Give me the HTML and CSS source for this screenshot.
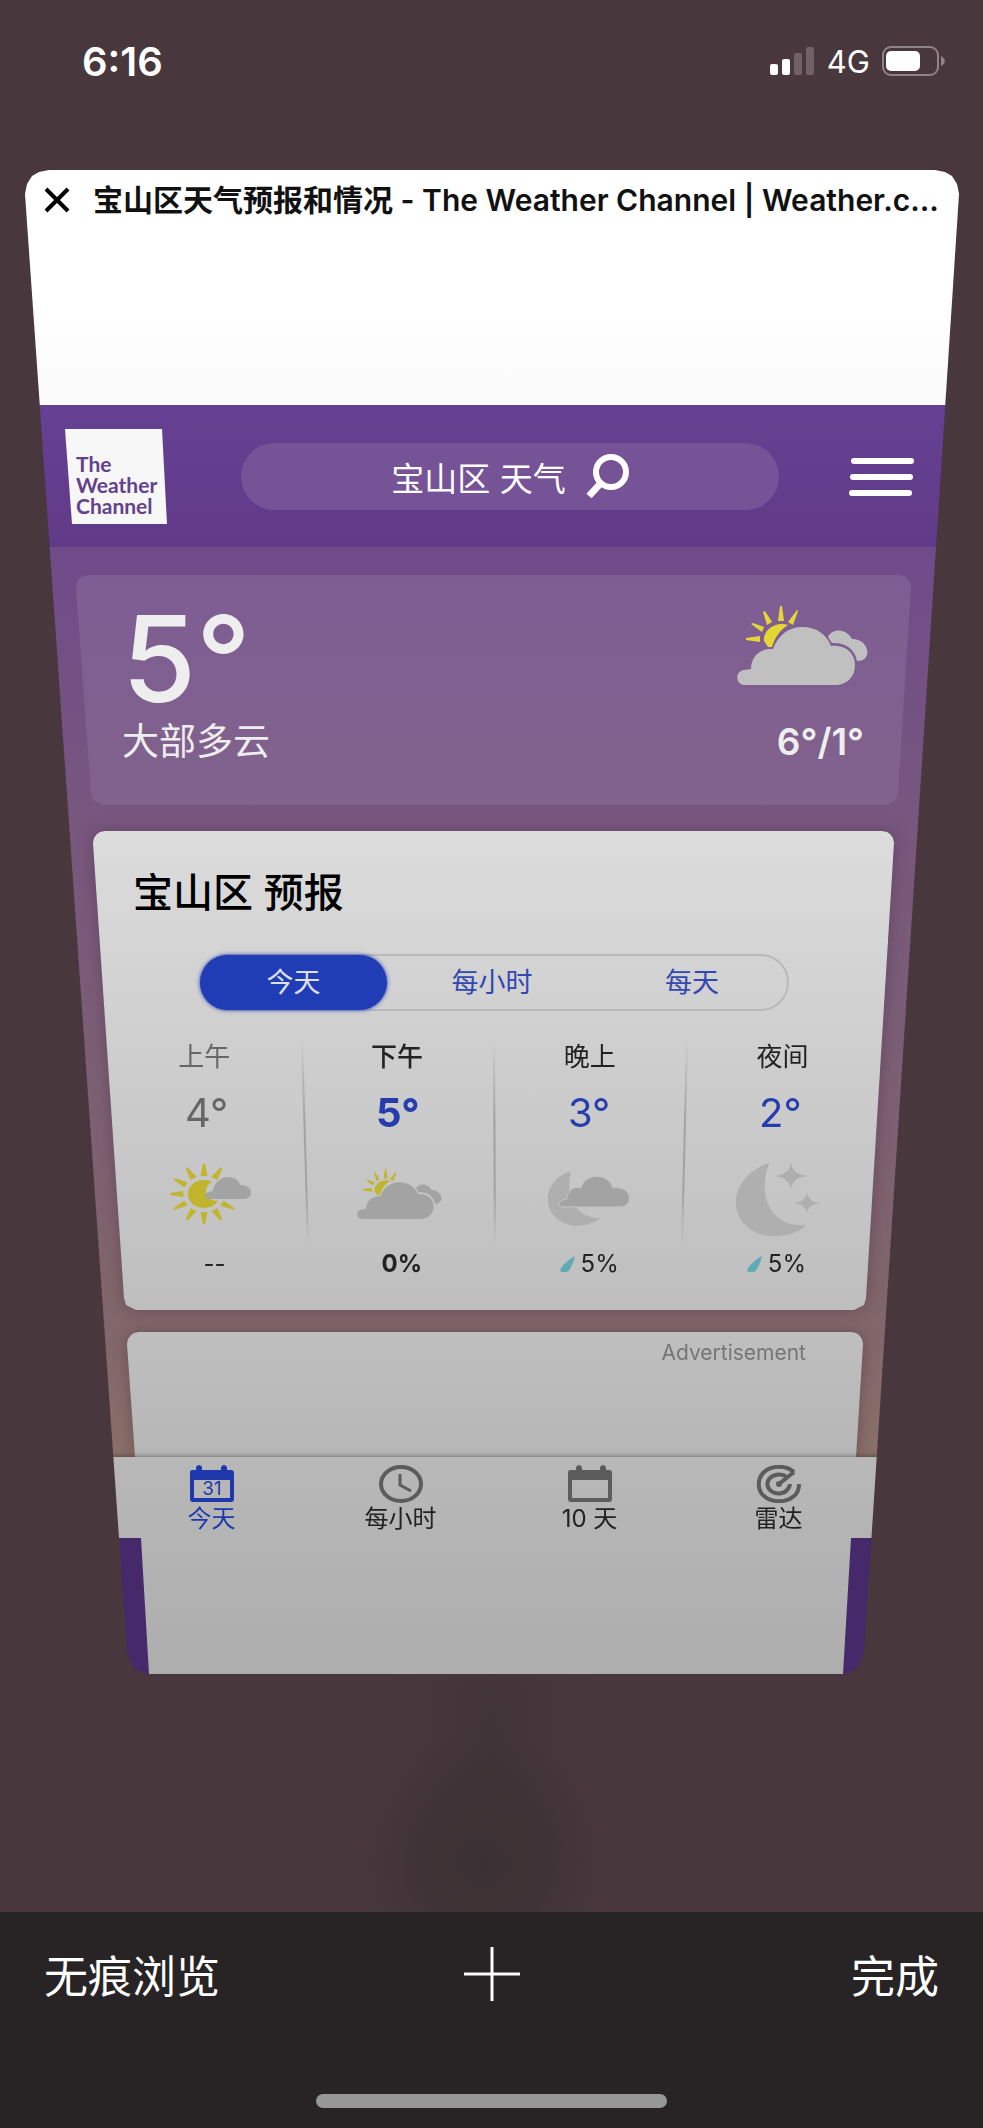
FILE: index.html
```html
<!DOCTYPE html>
<html lang="zh-CN">

<head>
  <meta charset="UTF-8">
  <meta name="viewport" content="width=device-width, initial-scale=1.0">
  <title>宝山区天气预报和情况</title>
  <link rel="stylesheet" href="styles.css">
</head>

<body>
  <!-- 共用图标 -->
  <svg class="defs" aria-hidden="true">
    <symbol id="cloudy" viewBox="0 0 131 79" preserveAspectRatio="none">
      <g class="sun">
        <path d="M31 41 L35 41 C38 31 43 24 51 19 C40 15 26 23 27 35 Z" />
        <path d="M9 32 L23 30 L23 36 L9 34 Z M14 18 L16 17 L27 21 L25 26 Z M26 6 L28 5 L35 16 L30 19 Z M43 0 L45 0 L47 15 L41 15 Z M60 4 L61 5 L56 19 L51 16 Z" />
      </g>
      <path class="cloud" d="M91 31 C95 22 109 22 115 33 C128 33 133 45 129 51 C127 54 124 55 120 55 C118 43 108 36 95 37 Z" />
      <path class="cloud" d="M7 79 C-2 78 -2 65 7 64 L14 63 C14 50 24 42 36 43 C41 29 52 21 65 21 C80 21 90 29 94 40 C108 38 118 47 118 59 C118 71 110 79 98 79 Z" />
    </symbol>
    <symbol id="drop" viewBox="0 0 15 16">
      <path d="M15 0 C14 5 12 9 10 13 C8 17 3 17 0 15 C1 10 8 4 15 0 Z" />
    </symbol>
  </svg>

  <header class="status">
    <span class="time">6:16</span>
    <div class="status-icons">
      <svg width="45" height="28" viewBox="0 0 45 28" fill="#fff">
        <rect x="0" y="17" width="8" height="11" rx="2" />
        <rect x="12" y="12" width="8" height="16" rx="2" />
        <rect x="24" y="6" width="8" height="22" rx="2" opacity=".22" />
        <rect x="36" y="0" width="8" height="28" rx="2" opacity=".22" />
      </svg>
      <span class="network">4G</span>
      <svg width="63" height="30" viewBox="0 0 63 30">
        <rect x="1" y="1" width="55" height="28" rx="8" fill="none" stroke="#8f8487" stroke-width="2" />
        <rect x="4" y="5" width="34" height="20" rx="5" fill="#fff" />
        <path d="M59 10 C64 12 64 18 59 20 Z" fill="#8f8487" />
      </svg>
    </div>
  </header>

  <main class="tab-card">
    <div class="tab-title">
      <button class="close" aria-label="关闭">
        <svg width="26" height="26" viewBox="0 0 26 26"><path d="M2 2 L24 24 M24 2 L2 24" stroke="#000" stroke-width="4" /></svg>
      </button>
      <h1>宝山区天气预报和情况 - The Weather Channel | Weather.c...</h1>
    </div>

    <div class="site-header">
      <a class="logo" href="#">The<br>Weather<br>Channel</a>
      <button class="search">
        宝山区 天气
        <svg width="43" height="45" viewBox="0 0 43 45" fill="none" stroke="#fff">
          <circle cx="25" cy="18" r="15" stroke-width="6" />
          <path d="M14 30 L3 42" stroke-width="7" />
        </svg>
      </button>
      <button class="menu" aria-label="菜单">
        <svg width="66" height="40" viewBox="0 0 66 40" stroke="#fff" stroke-width="6" stroke-linecap="round">
          <path d="M5 4 H62 M4 20 H61 M3 36 H60" />
        </svg>
      </button>
    </div>

    <div class="page">
      <section class="current trapezoid">
        <div>
          <div class="temp">5°</div>
          <div class="phrase">大部多云</div>
        </div>
        <div class="current-right">
          <svg class="icon-light" width="131" height="79"><use href="#cloudy" /></svg>
          <div class="range">6°/1°</div>
        </div>
      </section>

      <div class="shadow">
        <section class="forecast trapezoid">
          <h2>宝山区 预报</h2>
          <div class="tabs">
            <button class="active">今天</button>
            <button>每小时</button>
            <button>每天</button>
          </div>
          <div class="forecast-body">
            <svg class="dividers" viewBox="0 0 801 205" preserveAspectRatio="none" aria-hidden="true">
              <defs>
                <linearGradient id="fade" gradientUnits="userSpaceOnUse" x1="0" y1="0" x2="0" y2="205">
                  <stop offset="0" stop-color="#a2a2a2" stop-opacity="0" />
                  <stop offset=".4" stop-color="#a2a2a2" />
                  <stop offset=".75" stop-color="#a2a2a2" />
                  <stop offset="1" stop-color="#a2a2a2" stop-opacity="0" />
                </linearGradient>
              </defs>
              <path d="M209 0 L215 205 M401 0 L402 205 M594 0 L589 205" stroke="url(#fade)" stroke-width="2" />
            </svg>
            <table>
              <thead>
                <tr class="row-name">
                  <th class="past">上午</th>
                  <th class="now">下午</th>
                  <th>晚上</th>
                  <th>夜间</th>
                </tr>
              </thead>
              <tbody>
                <tr class="row-temp">
                  <td class="past">4°</td>
                  <td class="now">5°</td>
                  <td>3°</td>
                  <td>2°</td>
                </tr>
                <tr class="row-icon">
                  <td>
                    <svg width="81" height="60" viewBox="0 0 81 60">
                      <g class="sun" transform="translate(34 30) scale(1.15 1)">
                        <circle r="14" />
                        <path id="ray" d="M-1 -30 H1 L3 -18 H-3 Z" />
                        <use href="#ray" transform="rotate(30)" />
                        <use href="#ray" transform="rotate(120)" />
                        <use href="#ray" transform="rotate(150)" />
                        <use href="#ray" transform="rotate(180)" />
                        <use href="#ray" transform="rotate(210)" />
                        <use href="#ray" transform="rotate(240)" />
                        <use href="#ray" transform="rotate(270)" />
                        <use href="#ray" transform="rotate(300)" />
                        <use href="#ray" transform="rotate(330)" />
                      </g>
                      <circle class="hole" cx="46" cy="27" r="10" />
                      <path class="cloud" d="M36 35 C33 31 37 28 43 27 C45 10 67 9 70 21 C83 20 85 35 73 35 Z" />
                    </svg>
                  </td>
                  <td><svg width="85" height="50"><use href="#cloudy" /></svg></td>
                  <td>
                    <svg width="82" height="63" viewBox="0 -8 82 63">
                      <path class="moon" d="M23 0 C-3 8 -8 37 12 50 C25 58 43 55 53 47 C30 48 16 28 23 0 Z" />
                      <path class="cloud edged" d="M15 36 C10 36 10 30 15 29 L19 28 C19 20 25 15 33 17 C37 2 60 1 65 17 C85 14 86 36 72 36 Z" />
                    </svg>
                  </td>
                  <td>
                    <svg width="85" height="84" viewBox="0 -10 85 84">
                      <path class="moon" d="M33 1 C-3 13 -12 52 17 69 C36 79 62 73 70 63 C38 66 20 38 33 1 Z" />
                      <path class="moon" d="M55 0 Q56 13 72 14 Q56 15 55 28 Q54 15 38 14 Q54 13 55 0 Z M71 30 Q72 40 84 41 Q72 42 71 52 Q70 42 58 41 Q70 40 71 30 Z" />
                    </svg>
                  </td>
                </tr>
                <tr class="row-rain">
                  <td>--</td>
                  <td class="now">0%</td>
                  <td><svg class="drop" width="15" height="16"><use href="#drop" /></svg>5%</td>
                  <td><svg class="drop" width="15" height="16"><use href="#drop" /></svg>5%</td>
                </tr>
              </tbody>
            </table>
          </div>
        </section>
      </div>

      <div class="shadow">
        <section class="ad">Advertisement</section>
      </div>
    </div>

    <nav class="bottom-nav">
      <a class="active" href="#">
        <svg width="46" height="38" viewBox="0 0 46 38">
          <path fill="currentColor" fill-rule="evenodd" d="M3 5 H7 V2 Q10 -2 13 2 V5 H32 V2 Q35 -2 38 2 V5 H42 Q45 5 45 8 V34 Q45 37 42 37 H4 Q1 37 1 34 V8 Q1 5 3 5 Z M5 15 V33 H41 V15 Z" />
          <text x="23" y="30" text-anchor="middle" class="day">31</text>
        </svg>
        今天
      </a>
      <a href="#">
        <svg class="gray" width="46" height="38" viewBox="0 0 46 38" fill="none" stroke="currentColor" stroke-width="4">
          <ellipse cx="23" cy="19" rx="20" ry="17" />
          <path d="M22 9 V20 L33 26" stroke-width="3" />
        </svg>
        每小时
      </a>
      <a href="#">
        <svg class="gray" width="46" height="38" viewBox="0 0 46 38">
          <path fill="currentColor" fill-rule="evenodd" d="M3 5 H9 V2 Q12 -2 15 2 V5 H33 V2 Q36 -2 39 2 V5 H42 Q45 5 45 8 V34 Q45 37 42 37 H4 Q1 37 1 34 V8 Q1 5 3 5 Z M5 15 V33 H41 V15 Z" />
        </svg>
        10 天
      </a>
      <a href="#">
        <svg class="gray" width="46" height="38" viewBox="0 0 46 38" fill="none" stroke="currentColor" stroke-width="4">
          <path d="M38 7 C30 0 16 0 8 7 C1 14 1 25 8 31 C16 38 30 38 38 31 C42 28 43 23 43 19" />
          <path d="M31 12 C26 8 18 9 14 13 C10 17 11 23 15 26 C20 30 28 29 31 25 C33 23 34 21 34 19" />
          <path d="M23 19 L38 7" />
          <circle cx="23" cy="19" r="3" fill="currentColor" stroke="none" />
        </svg>
        雷达
      </a>
    </nav>
    <div class="page-end"><div></div></div>
  </main>

  <footer class="toolbar">
    <div class="actions">
      <button>无痕浏览</button>
      <button aria-label="新建标签页">
        <svg width="56" height="56" viewBox="0 0 56 56"><path d="M28 1 V55 M0 28 H56" stroke="#fff" stroke-width="3" /></svg>
      </button>
      <button>完成</button>
    </div>
    <div class="home-bar"></div>
  </footer>
</body>

</html>
```

FILE: styles.css
```css
* {
  box-sizing: border-box;
}

body {
  margin: 0;
  min-height: 100vh;
  display: flex;
  flex-direction: column;
  background:
    radial-gradient(ellipse 140px 130px at 49% 1865px, #3b3033, transparent),
    radial-gradient(ellipse 110px 260px at 50% 1740px, #413438, transparent),
    #48383d;
  font-family: Inter, "Noto Sans CJK SC", sans-serif;
  color: #222;
}

button {
  border: 0;
  padding: 0;
  background: none;
  font-family: inherit;
  color: inherit;
}

a {
  color: inherit;
  text-decoration: none;
}

svg {
  display: block;
  flex-shrink: 0;
}

.defs {
  position: absolute;
  width: 0;
  height: 0;
}

/* 状态栏 */
.status {
  display: flex;
  justify-content: space-between;
  align-items: center;
  padding: 36px 38px 0 82px;
  height: 86px;
  margin-bottom: 84px;
  color: #fff;
}

.time {
  font-size: 40px;
  font-weight: 600;
}

.status-icons {
  display: flex;
  align-items: center;
  gap: 12px;
}

.network {
  font-size: 31px;
}

/* 倾斜的标签页卡片 */
.tab-card {
  margin: 0 24px 0 25px;
  clip-path: polygon(0 24px, 2px 14px, 7px 6px, 14px 2px, 24px 0, calc(100% - 24px) 0, calc(100% - 14px) 2px, calc(100% - 7px) 6px, calc(100% - 2px) 14px, 100% 24px, calc(100% - 95px) calc(100% - 22px), calc(100% - 101px) calc(100% - 6px), calc(100% - 115px) 100%, 121px 100%, 108px calc(100% - 6px), 102px calc(100% - 22px));
}

.tab-title {
  display: flex;
  align-items: center;
  gap: 23px;
  height: 235px;
  padding: 6px 12px 181px 19px;
  background: linear-gradient(#fff 60%, #fafafa);
}

.tab-title h1 {
  margin: 0;
  font-size: 30px;
  line-height: 46px;
  font-weight: 600;
  white-space: nowrap;
  color: #111;
}

.site-header {
  display: flex;
  align-items: center;
  justify-content: space-between;
  padding: 24px 44px 23px 40px;
  background: linear-gradient(#664092, #613b89);
}

.logo {
  width: 102px;
  padding: 24px 0 8px 11px;
  font: 700 21px/21px Lato, sans-serif;
  color: #63418d;
  background: #f7f7f7;
  clip-path: polygon(0 0, 97px 0, 100% 100%, 7px 100%);
}

.search {
  display: flex;
  align-items: center;
  justify-content: center;
  gap: 20px;
  flex: 1;
  max-width: 538px;
  height: 67px;
  border-radius: 34px;
  background: #755396;
  color: #fff;
  font-size: 33px;
  margin: 0 38px 0 42px;
}

.page {
  padding-top: 28px;
  background: linear-gradient(#6f4b8a, #77577e 30%, #80666a 84%, #8a7068);
}

.trapezoid {
  --lb: 31px;
  --rb: 28px;
  clip-path: polygon(0 12px, 1px 7px, 4px 3px, 7px 1px, 12px 0, calc(100% - 12px) 0, calc(100% - 7px) 1px, calc(100% - 4px) 3px, calc(100% - 1px) 7px, 100% 12px, calc(100% - var(--rb)) calc(100% - 12px), calc(100% - var(--rb) - 2px) calc(100% - 5px), calc(100% - var(--rb) - 12px) 100%, calc(var(--lb) + 12px) 100%, calc(var(--lb) + 2px) calc(100% - 5px), var(--lb) calc(100% - 12px));
}

.shadow {
  filter: drop-shadow(0 0 8px rgba(70, 40, 60, .4));
}

/* 当前天气 */
.current {
  --lb: 15px;
  --rb: 13px;
  display: flex;
  justify-content: space-between;
  margin: 0 48px 26px 51px;
  padding: 31px 43px 33px 46px;
  background: linear-gradient(#7e5d94, #81628b);
  color: #eee;
}

.temp {
  font-size: 120px;
  line-height: 106px;
  font-weight: 500;
}

.phrase {
  font-size: 37px;
  line-height: 60px;
}

.current-right {
  display: flex;
  flex-direction: column;
  align-items: flex-end;
  gap: 27px;
}

.range {
  font-size: 37px;
  line-height: 60px;
  font-weight: 600;
  padding-right: 4px;
}

.sun {
  fill: #c1b52d;
}

.cloud {
  fill: #a3a3a3;
}

.moon {
  fill: #afafaf;
}

.hole {
  fill: #c6c6c6;
}

.edged {
  stroke: #c4c4c4;
  stroke-width: 1;
}

.icon-light {
  filter: brightness(1.18);
}

/* 预报 */
.forecast {
  margin: 0 65px 22px 68px;
  padding: 38px 0 19px;
  background: linear-gradient(#dcdcdc, #bebebe);
}

.forecast h2 {
  margin: 0 40px 37px;
  font-size: 40px;
  line-height: 48px;
  font-weight: 500;
  color: #000;
}

.tabs {
  display: flex;
  gap: 10px;
  margin: 0 105px 24px 107px;
  height: 57px;
  border: 2px solid #b9b9b9;
  border-radius: 29px;
}

.tabs button {
  flex: 1;
  padding-bottom: 4px;
  font-size: 27px;
  color: #3347b0;
}

.tabs .active {
  flex: 0 0 187px;
  margin: -1px 0 -1px -2px;
  border-radius: 28px;
  background: #213db5;
  box-shadow: 0 0 4px #213db5;
  color: #dde0f0;
}

.forecast-body {
  position: relative;
}

.dividers {
  position: absolute;
  top: 4px;
  left: 0;
  width: 100%;
  height: 205px;
}

table,
thead,
tbody {
  display: block;
}

tr {
  display: grid;
  grid-template-columns: repeat(4, 1fr);
  justify-items: center;
  align-items: center;
}

th,
td {
  display: flex;
  align-items: center;
  padding: 0;
  font-weight: 400;
}

.row-name {
  padding: 0 15px;
  height: 38px;
  font-size: 26px;
}

.row-name .now {
  font-weight: 500;
}

.row-temp {
  padding: 0 18px;
  height: 79px;
  font-size: 40px;
  color: #253dae;
}

.row-temp .now,
.row-rain .now {
  font-weight: 700;
}

.row-name .past,
.row-temp .past {
  color: #666;
}

.row-icon {
  padding: 0 21px 0 23px;
  height: 84px;
}

.row-rain {
  padding: 0 24px 0 28px;
  height: 55px;
  font-size: 24px;
}

.drop {
  margin-right: 6px;
  fill: #5faab7;
}

.ad {
  height: 125px;
  margin: 0 96px 0 102px;
  padding: 7px 57px 0;
  background: linear-gradient(#bfbfbf, #b6b6b6);
  clip-path: polygon(0 12px, 1px 7px, 4px 3px, 7px 1px, 12px 0, calc(100% - 12px) 0, calc(100% - 7px) 1px, calc(100% - 4px) 3px, calc(100% - 1px) 7px, 100% 12px, calc(100% - 7px) 100%, 8px 100%);
  text-align: right;
  font-size: 21px;
  line-height: 28px;
  color: #757575;
}

.bottom-nav {
  position: relative;
  display: grid;
  grid-template-columns: repeat(4, 1fr);
  height: 81px;
  padding: 8px 86px 0 92px;
  background: linear-gradient(#b8b8b8, #b4b4b4);
  box-shadow: 0 -1px 5px rgba(0, 0, 0, .35);
}

.bottom-nav a {
  display: flex;
  flex-direction: column;
  align-items: center;
  font-size: 24px;
  line-height: 32px;
}

.bottom-nav .active {
  color: #1f39ad;
}

.gray {
  color: #5c5c5c;
}

.day {
  font-size: 19px;
  fill: currentColor;
}

.page-end {
  position: relative;
  padding: 0 108px 0 116px;
  background: #45296a;
}

.page-end div {
  height: 136px;
  background: linear-gradient(#b4b4b4, #adadad);
  clip-path: polygon(0 0, 100% 0, calc(100% - 8px) 100%, 8px 100%);
}

/* 底部工具栏 */
.toolbar {
  margin-top: auto;
  padding: 30px 44px 20px;
  background: #282324;
  color: #fff;
}

.actions {
  display: grid;
  grid-template-columns: 1fr auto 1fr;
  align-items: center;
  height: 66px;
  margin-bottom: 86px;
}

.actions button {
  padding-bottom: 2px;
  font-size: 44px;
  justify-self: start;
}

.actions button:last-child {
  justify-self: end;
}

.home-bar {
  width: 351px;
  height: 14px;
  margin: 0 auto;
  border-radius: 7px;
  background: #979797;
}
```
